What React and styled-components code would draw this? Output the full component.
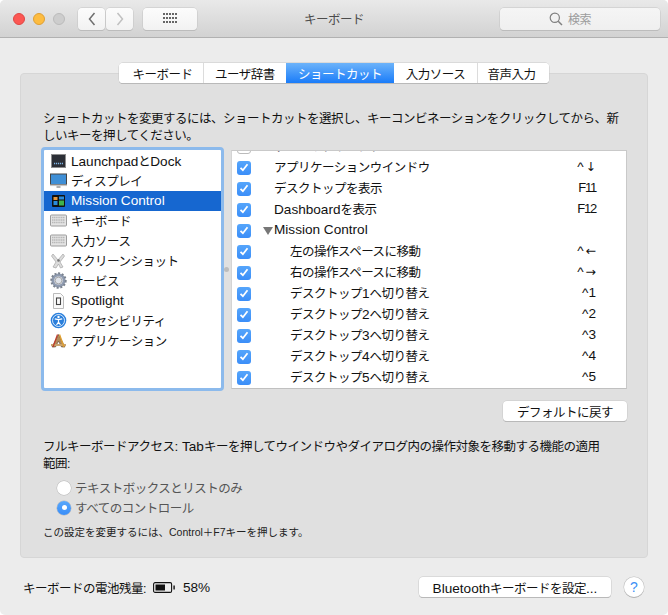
import React from "react";
import styled, { createGlobalStyle } from "styled-components";

const Global = createGlobalStyle`
  html, body { margin: 0; padding: 0; background: #fff; }
  body { font-family: "Liberation Sans", "Noto Sans CJK JP", sans-serif; font-size: 12.5px; letter-spacing: -0.5px; color: #111; }
`;

const Window = styled.div`
  width: 668px; height: 615px; background: #ececec; border-radius: 5px; overflow: hidden;
  display: flex; flex-direction: column; box-sizing: border-box;
`;
const TitleBar = styled.header`
  height: 38px; box-sizing: border-box; flex: none;
  display: grid; grid-template-columns: 1fr auto 1fr; align-items: center;
  background: linear-gradient(#e9e9e9, #d2d2d2); border-bottom: 1px solid #b1b1b1;
`;
const LeftTools = styled.div`display: flex; align-items: center; padding-left: 13px;`;
const RightTools = styled.div`display: flex; justify-content: flex-end; padding-right: 8px;`;
const Lights = styled.div`display: flex; gap: 8px; margin-right: 13px;`;
const Light = styled.span`
  width: 12px; height: 12px; border-radius: 50%; box-sizing: border-box;
  background: ${p => p.$c}; border: 0.5px solid ${p => p.$b};
`;
const ToolBtn = styled.button`
  width: ${p => p.$w}px; height: 22px; padding: 0; box-sizing: border-box; margin-right: ${p => p.$mr || 0}px;
  display: flex; align-items: center; justify-content: center;
  background: linear-gradient(#fcfcfc, #f2f2f2); border: 0; border-radius: 4px;
  box-shadow: 0 0 0 0.5px #c4c4c4, 0 1px 0 #b5b5b5;
`;
const Title = styled.h1`margin: 0; font-size: 12.5px; font-weight: 400; color: #4c4c4c;`;
const Search = styled.div`
  width: 160px; height: 22px; box-sizing: border-box; display: flex; align-items: center; justify-content: center; gap: 5px;
  padding-right: 20px;
  background: linear-gradient(#f5f5f5, #efefef); border-radius: 4px; color: #9c9c9c; font-size: 12px;
  box-shadow: 0 0 0 0.5px #c4c4c4, 0 1px 0 #b5b5b5;
`;
const Main = styled.main`flex: 1; padding: 25px 20px 0; display: flex; flex-direction: column;`;
const Tabs = styled.nav`
  align-self: center; display: flex; position: relative; z-index: 1; height: 20px; width: 430px; box-sizing: border-box;
  background: #fff; border-radius: 4px; overflow: hidden;
  box-shadow: 0 0 0 0.5px #c8c8c8, 0 1px 0 #aaa;
`;
const Tab = styled.div`
  box-sizing: border-box; width: ${p => p.$w}px; display: flex; align-items: center; justify-content: center;
  border-left: ${p => p.$div ? "1px solid #dcdcdc" : "0"};
  background: ${p => p.$on ? "linear-gradient(#6cb3fa, #1a7cf9)" : "#fff"};
  color: ${p => p.$on ? "#fff" : "#111"};
  &:first-child { padding-left: 3px; }
  &:last-child { padding-right: 4px; }
`;
const Panel = styled.section`
  margin-top: -10px; height: 485px; box-sizing: border-box; background: #e0e0e0;
  border: 1px solid #d6d6d6; border-radius: 4px; padding: 37px 20px 0 22px;
  display: flex; flex-direction: column;
`;
const Intro = styled.p`margin: 0; line-height: 17px; width: 580px;`;
const Panes = styled.div`display: flex; margin: 2px 0 0 -2px; height: 244px;`;
const ListBox = styled.div`
  width: 183px; height: 244px; box-sizing: border-box; background: #fff; border: 3px solid #8cbaec; border-radius: 4px;
  padding-top: 1px; flex: none; overflow: hidden;
`;
const Cat = styled.div`
  height: 20px; display: flex; align-items: center; padding-left: 6px; gap: 4px; white-space: nowrap;
  background: ${p => p.$on ? "#1667d0" : "transparent"}; color: ${p => p.$on ? "#fff" : "#111"};
  & > svg { flex: none; margin-bottom: 1px; }
`;
const CatLabel = styled.span`padding-bottom: 2px;`;
const Splitter = styled.div`width: 7px; flex: none; display: flex; align-items: center;`;
const Grip = styled.span`width: 5px; height: 5px; border-radius: 50%; background: #bcbcbc;`;
const Table = styled.div`
  width: 397px; height: 239px; margin-top: 3px; box-sizing: border-box; background: #fff; overflow: hidden;
  border: 1px solid #c9c9c9; border-bottom-color: #c0c0c0; border-left-color: #d4d4d4;
`;
const RowList = styled.div`margin-top: -15px;`;
const Row = styled.div`
  height: 21px; display: flex; align-items: center; padding-left: 5px; padding-right: 30px;
`;
const Check = styled.span`
  width: 14px; height: 14px; border-radius: 3px; flex: none; display: flex; align-items: center; justify-content: center; box-sizing: border-box;
  background: ${p => p.$off ? "#fff" : "linear-gradient(#55a5fb, #3b8ef8)"};
  border: ${p => p.$off ? "1px solid #bbb" : "0"};
`;
const RowLabel = styled.span`
  flex: 1; margin-left: ${p => p.$m}px; white-space: nowrap; padding-bottom: 2px;
`;
const Disclosure = styled.span`
  width: 0; height: 0; margin-left: 12px; margin-right: 1px; border-left: 5px solid transparent; border-right: 5px solid transparent; border-top: 8px solid #777; flex: none;
`;
const Lat = styled.span`font-size: 13.6px; letter-spacing: 0;`;
const Key = styled.span`
  white-space: nowrap; display: flex; align-items: center; padding-bottom: 2px;
  ${Lat} { letter-spacing: ${p => (p.$tight ? "-1.2px" : "0")}; font-size: ${p => (p.$tight ? "13px" : "13.6px")}; }
`;
const Arrow = styled.span`font-family: "DejaVu Sans", sans-serif; font-size: 12.5px; letter-spacing: 0; margin-left: 2px;`;
const ActionRow = styled.div`display: flex; justify-content: flex-end; margin-top: 10px; width: 584px;`;
const PushBtn = styled.button`
  width: ${p => p.$w}px; height: 20px; padding: 0; box-sizing: border-box; font: inherit; letter-spacing: inherit; color: #111; flex: none;
  background: #fff; border: 0; border-radius: 4px; box-shadow: 0 0 0 0.5px #c8c8c8, 0 1px 0 #aaa;
`;
const Para = styled.p`margin: 17px 0 0; line-height: 17px; width: 565px;`;
const Radios = styled.div`display: flex; flex-direction: column; gap: 5px; margin: 7px 0 0 14px;`;
const RadioRow = styled.label`display: flex; align-items: center; gap: 4px; height: 15px; color: #555;`;
const Radio = styled.span`
  width: 14px; height: 14px; border-radius: 50%; box-sizing: border-box; display: flex; align-items: center; justify-content: center;
  background: ${p => p.$on ? "linear-gradient(#58a7fb, #3a8ef8)" : "#fff"};
  box-shadow: 0 0 0 0.5px #b5b5b5;
  &::after { content: ""; width: 5px; height: 5px; border-radius: 50%; background: ${p => p.$on ? "#fff" : "transparent"}; }
`;
const Note = styled.p`margin: 10px 0 0 0; font-size: 10.5px; letter-spacing: 0; line-height: 14px; color: #222;`;
const Footer = styled.footer`
  display: flex; align-items: center; padding: 19px 4px 0 3px;
`;
const Battery = styled.span`display: flex; align-items: center; gap: 8px; margin-left: 7px; margin-right: auto;`;
const Help = styled.button`
  width: 20px; height: 20px; padding: 0; margin-left: 13px; border: 0; border-radius: 50%; background: #fff; color: #3d8ff5;
  font: inherit; font-size: 14px; box-shadow: 0 0 0 0.5px #bdbdbd, 0 1px 0 #aaa;
`;

const T = ({ children }) =>
  children.split(/([A-Za-z0-9%.:^][A-Za-z0-9%.:^ ]*)/).map((s, i) => (i % 2 ? <Lat key={i}>{s}</Lat> : s));

const Keyboard = () => (
  <svg width="17" height="13" viewBox="0 0 17 13">
    <rect x="0.5" y="1" width="16" height="11" rx="1" fill="#e4e4e4" stroke="#9c9c9c" />
    {[3, 5.5, 8].map(y => <path key={y} d={`M2 ${y + 0.5}H15`} stroke="#b8b8b8" strokeWidth="1.4" strokeDasharray="1.3 .5" />)}
  </svg>
);
const Dock = () => (
  <svg width="17" height="16" viewBox="0 0 17 16">
    <rect x="1.5" y="1.5" width="14" height="13" fill="#2c2f36" stroke="#8e8e8e" />
    <path d="M4 10.5H13" stroke="#7fb6e8" strokeWidth="1.3" strokeDasharray="1.2 .8" />
  </svg>
);
const Display = () => (
  <svg width="17" height="16" viewBox="0 0 17 16">
    <rect x="0.5" y="1" width="16" height="10.5" fill="#3f8fd6" stroke="#444" />
    <rect x="0" y="11.5" width="17" height="1.6" fill="#c8c8c8" />
    <path d="M6.5 13H10.5V15H6.5Z" fill="#b0b0b0" />
  </svg>
);
const Mission = () => (
  <svg width="17" height="16" viewBox="0 0 17 16">
    <rect x="2" y="2" width="13" height="12" rx="1" fill="#111" />
    <rect x="3.5" y="4" width="4" height="3" fill="#e8983c" />
    <rect x="9" y="3.5" width="5" height="3" fill="#2a8bdc" />
    <rect x="3.5" y="8" width="4" height="4" fill="#2a8bdc" />
    <rect x="9" y="7.5" width="5" height="5" fill="#3fb24b" />
  </svg>
);
const Shot = () => (
  <svg width="17" height="16" viewBox="0 0 17 16">
    <path d="M3 1L8 7L13 1L14.5 3L10 9L13 14L10.5 15L8.5 11L6 15L3 14L6 9L1.5 3Z" fill="#dcdcdc" stroke="#a5a5a5" strokeWidth=".7" />
    <circle cx="8.5" cy="7.5" r="1.3" fill="#777" />
  </svg>
);
const Gear = () => (
  <svg width="17" height="17" viewBox="0 0 17 17">
    <circle cx="8.5" cy="8.5" r="5.6" fill="none" stroke="#8f9bb0" strokeWidth="3" />
    <circle cx="8.5" cy="8.5" r="7.2" fill="none" stroke="#7b838f" strokeWidth="2" strokeDasharray="2 1.7" />
    <circle cx="8.5" cy="8.5" r="3.4" fill="#dfe3ea" stroke="#777" strokeWidth=".6" />
  </svg>
);
const Spot = () => (
  <svg width="17" height="16" viewBox="0 0 17 16">
    <path d="M3.5 .5H10.5L13.5 3.5V15.5H3.5Z" fill="#fafafa" stroke="#bbb" />
    <rect x="6.5" y="5" width="4" height="6.5" fill="none" stroke="#444" strokeWidth="1.1" />
  </svg>
);
const Access = () => (
  <svg width="17" height="17" viewBox="0 0 17 17">
    <circle cx="8.5" cy="8.5" r="7.8" fill="#2a7fdc" />
    <circle cx="8.5" cy="8.5" r="6" fill="none" stroke="#fff" strokeWidth=".8" />
    <circle cx="8.5" cy="5" r="1.2" fill="#fff" />
    <path d="M4.8 6.8L8.5 7.6L12.2 6.8M8.5 7.6V10L6.5 13M8.5 10L10.5 13" fill="none" stroke="#fff" strokeWidth="1.2" />
  </svg>
);
const AppIcon = () => (
  <svg width="17" height="16" viewBox="0 0 17 16">
    <path d="M2 14L8.5 1.5L15 14H11.5L8.5 8L5.5 14Z" fill="#b28a5a" stroke="#5a4630" strokeWidth=".6" />
    <path d="M1 12H16" stroke="#c9a36e" strokeWidth="2" />
    <path d="M9.5 1.5L14 14" stroke="#e0a030" strokeWidth="1.4" />
    <path d="M7.5 1.5L3 14" stroke="#c0392b" strokeWidth="1.2" />
  </svg>
);
const Tick = () => (
  <svg width="10" height="9" viewBox="0 0 10 9">
    <path d="M1.5 4.8L3.9 7.2L8.5 1.3" fill="none" stroke="#fff" strokeWidth="1.8" />
  </svg>
);
const Chevron = ({ d, c }) => (
  <svg width="10" height="16" viewBox="0 0 10 16">
    <path d={d} fill="none" stroke={c} strokeWidth="1.5" />
  </svg>
);
const Dots = () => (
  <svg width="15" height="11" viewBox="0 0 15 11" fill="#666">
    {[0, 4, 8].flatMap(y => [0, 3, 6, 9, 12].map(x => <rect key={`${x}-${y}`} x={x} y={y} width="2" height="2" />))}
  </svg>
);
const Lens = () => (
  <svg width="14" height="14" viewBox="0 0 14 14">
    <circle cx="5.8" cy="5.8" r="4.6" fill="none" stroke="#808080" strokeWidth="1.2" />
    <path d="M9.2 9.2L13 13" stroke="#808080" strokeWidth="1.5" />
  </svg>
);
const BatteryIcon = () => (
  <svg width="22" height="11" viewBox="0 0 22 11">
    <rect x="0.6" y="0.6" width="18" height="9.8" rx="1.5" fill="none" stroke="#111" strokeWidth="1.1" />
    <rect x="2.5" y="2.5" width="9.5" height="6" fill="#111" />
    <rect x="20.4" y="3.5" width="1.4" height="4" fill="#111" />
  </svg>
);

const cats = [
  ["LaunchpadとDock", Dock], ["ディスプレイ", Display], ["Mission Control", Mission, true],
  ["キーボード", Keyboard], ["入力ソース", Keyboard], ["スクリーンショット", Shot], ["サービス", Gear],
  ["Spotlight", Spot], ["アクセシビリティ", Access], ["アプリケーション", AppIcon],
];
const rows = [
  { t: "すべてのウインドウ", k: "^", a: "↑", off: true },
  { t: "アプリケーションウインドウ", k: "^", a: "↓" },
  { t: "デスクトップを表示", k: "F11" },
  { t: "Dashboardを表示", k: "F12" },
  { t: "Mission Control", k: "", group: true },
  { t: "左の操作スペースに移動", k: "^", a: "←", i: 1 },
  { t: "右の操作スペースに移動", k: "^", a: "→", i: 1 },
  { t: "デスクトップ1へ切り替え", k: "^1", i: 1 },
  { t: "デスクトップ2へ切り替え", k: "^2", i: 1 },
  { t: "デスクトップ3へ切り替え", k: "^3", i: 1 },
  { t: "デスクトップ4へ切り替え", k: "^4", i: 1 },
  { t: "デスクトップ5へ切り替え", k: "^5", i: 1 },
];
const tabs = [["キーボード", 84], ["ユーザ辞書", 83], ["ショートカット", 108], ["入力ソース", 83], ["音声入力", 72]];

export default function App() {
  return (
    <Window>
      <Global />
      <TitleBar>
        <LeftTools>
          <Lights>
            <Light $c="#fc5753" $b="#df4744" />
            <Light $c="#fdbc40" $b="#de9f34" />
            <Light $c="#cdcdcd" $b="#bbb" />
          </Lights>
          <ToolBtn $w={27} $mr={1}><Chevron d="M7.5 2L2.5 8L7.5 14" c="#6f6f6f" /></ToolBtn>
          <ToolBtn $w={27} $mr={10}><Chevron d="M2.5 2L7.5 8L2.5 14" c="#c0c0c0" /></ToolBtn>
          <ToolBtn $w={54}><Dots /></ToolBtn>
        </LeftTools>
        <Title>キーボード</Title>
        <RightTools><Search><Lens />検索</Search></RightTools>
      </TitleBar>
      <Main>
        <Tabs>
          {tabs.map(([t, w], i) => <Tab key={t} $w={w} $on={i === 2} $div={i > 0 && i !== 2 && i !== 3}>{t}</Tab>)}
        </Tabs>
        <Panel>
          <Intro>ショートカットを変更するには、ショートカットを選択し、キーコンビネーションをクリックしてから、新しいキーを押してください。</Intro>
          <Panes>
            <ListBox>
              {cats.map(([t, I, on]) => <Cat key={t} $on={on}><I /><CatLabel><T>{t}</T></CatLabel></Cat>)}
            </ListBox>
            <Splitter><Grip /></Splitter>
            <Table>
              <RowList>
                {rows.map(r => (
                  <Row key={r.t}>
                    <Check $off={r.off}>{!r.off && <Tick />}</Check>
                    {r.group && <Disclosure />}
                    <RowLabel $m={r.group ? 0 : (r.i || 0) * 16 + 23}><T>{r.t}</T></RowLabel>
                    <Key $tight={r.k.startsWith("F")}><T>{r.k}</T>{r.a && <Arrow>{r.a}</Arrow>}</Key>
                  </Row>
                ))}
              </RowList>
            </Table>
          </Panes>
          <ActionRow><PushBtn $w={124}>デフォルトに戻す</PushBtn></ActionRow>
          <Para><T>フルキーボードアクセス: Tabキーを押してウインドウやダイアログ内の操作対象を移動する機能の適用</T><br />範囲:</Para>
          <Radios>
            <RadioRow><Radio />テキストボックスとリストのみ</RadioRow>
            <RadioRow><Radio $on />すべてのコントロール</RadioRow>
          </Radios>
          <Note>この設定を変更するには、Control＋F7キーを押します。</Note>
        </Panel>
        <Footer>
          キーボードの電池残量:
          <Battery><BatteryIcon /><Lat>58%</Lat></Battery>
          <PushBtn $w={192}><T>Bluetoothキーボードを設定...</T></PushBtn>
          <Help>?</Help>
        </Footer>
      </Main>
    </Window>
  );
}
